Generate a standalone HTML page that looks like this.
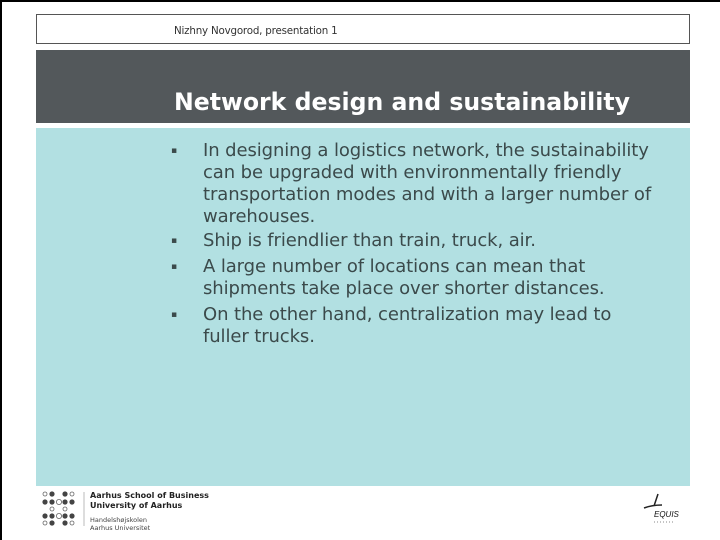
<!DOCTYPE html>
<html><head><meta charset="utf-8"><style>
*{margin:0;padding:0;box-sizing:border-box}
body{width:720px;height:540px;background:#fff;position:relative;overflow:hidden;font-family:"DejaVu Sans","Liberation Sans",sans-serif}
.edge{position:absolute;background:#000}
.hdr{position:absolute;left:36px;top:14px;width:654px;height:30px;border:1px solid #555}
.hdr span{position:absolute;left:137px;top:10px;font-size:10.3px;color:#333;letter-spacing:-0.2px}
.band{position:absolute;left:36px;top:50px;width:654px;height:73px;background:#53585b}
.band h1{position:absolute;left:138px;top:38px;font-size:23.6px;color:#fff;font-weight:bold;white-space:nowrap}
.body{position:absolute;left:36px;top:128px;width:654px;height:358px;background:#b2e0e2}
.it{position:absolute;left:171px;color:#3b4a4b;font-size:18px;line-height:22px}
.it b{position:absolute;left:0;top:0;font-size:9px;font-weight:normal}
.it p{position:relative;left:32px;white-space:nowrap;letter-spacing:-0.1px}
.logo{position:absolute;left:90px;top:491px;font-size:8px;font-weight:bold;color:#222;line-height:10px}
.logo2{position:absolute;left:90px;top:516px;font-size:6.5px;color:#444;line-height:8px}
</style></head><body>
<div class="edge" style="left:0;top:0;width:720px;height:2px"></div>
<div class="edge" style="left:0;top:0;width:2px;height:540px"></div>
<div class="hdr"><span>Nizhny Novgorod, presentation 1</span></div>
<div class="band"><h1>Network design and sustainability</h1></div>
<div class="body"></div>
<div class="it" style="top:140px"><b>▪</b><p>In designing a logistics network, the sustainability<br>can be upgraded with environmentally friendly<br>transportation modes and with a larger number of<br>warehouses.</p></div>
<div class="it" style="top:230px"><b>▪</b><p>Ship is friendlier than train, truck, air.</p></div>
<div class="it" style="top:256px"><b>▪</b><p>A large number of locations can mean that<br>shipments take place over shorter distances.</p></div>
<div class="it" style="top:304px"><b>▪</b><p>On the other hand, centralization may lead to<br>fuller trucks.</p></div>
<svg style="position:absolute;left:40px;top:490px" width="46" height="38">
<g fill="#444">
<circle cx="5" cy="4" r="2" fill="none" stroke="#666" stroke-width="0.8"/><circle cx="12" cy="4" r="2.6"/><circle cx="25" cy="4" r="2.6"/><circle cx="32" cy="4" r="2" fill="none" stroke="#666" stroke-width="0.8"/>
<circle cx="5" cy="12" r="2.6"/><circle cx="12" cy="12" r="2.6"/><circle cx="19" cy="12" r="2.6" fill="none" stroke="#666" stroke-width="0.8"/><circle cx="25" cy="12" r="2.6"/><circle cx="32" cy="12" r="2.6"/>
<circle cx="12" cy="19" r="2" fill="none" stroke="#666" stroke-width="0.8"/><circle cx="25" cy="19" r="2" fill="none" stroke="#666" stroke-width="0.8"/>
<circle cx="5" cy="26" r="2.6"/><circle cx="12" cy="26" r="2.6"/><circle cx="19" cy="26" r="2.6" fill="none" stroke="#666" stroke-width="0.8"/><circle cx="25" cy="26" r="2.6"/><circle cx="32" cy="26" r="2.6"/>
<circle cx="5" cy="33" r="2" fill="none" stroke="#666" stroke-width="0.8"/><circle cx="12" cy="33" r="2.6"/><circle cx="25" cy="33" r="2.6"/><circle cx="32" cy="33" r="2" fill="none" stroke="#666" stroke-width="0.8"/>
</g><line x1="44" y1="2" x2="44" y2="36" stroke="#bbb"/></svg>
<div class="logo">Aarhus School of Business<br>University of Aarhus</div>
<div class="logo2">Handelshøjskolen<br>Aarhus Universitet</div>
<svg style="position:absolute;left:640px;top:492px" width="50" height="36">
<path d="M18 2 L14 14 M4 16 Q12 13 22 13" stroke="#222" stroke-width="1.5" fill="none"/>
<text x="14" y="25" font-size="8" font-style="italic" font-family="Liberation Sans,sans-serif" fill="#111">EQUIS</text>
<line x1="14" y1="30" x2="34" y2="30" stroke="#888" stroke-dasharray="1 2"/>
</svg>
</body></html>
